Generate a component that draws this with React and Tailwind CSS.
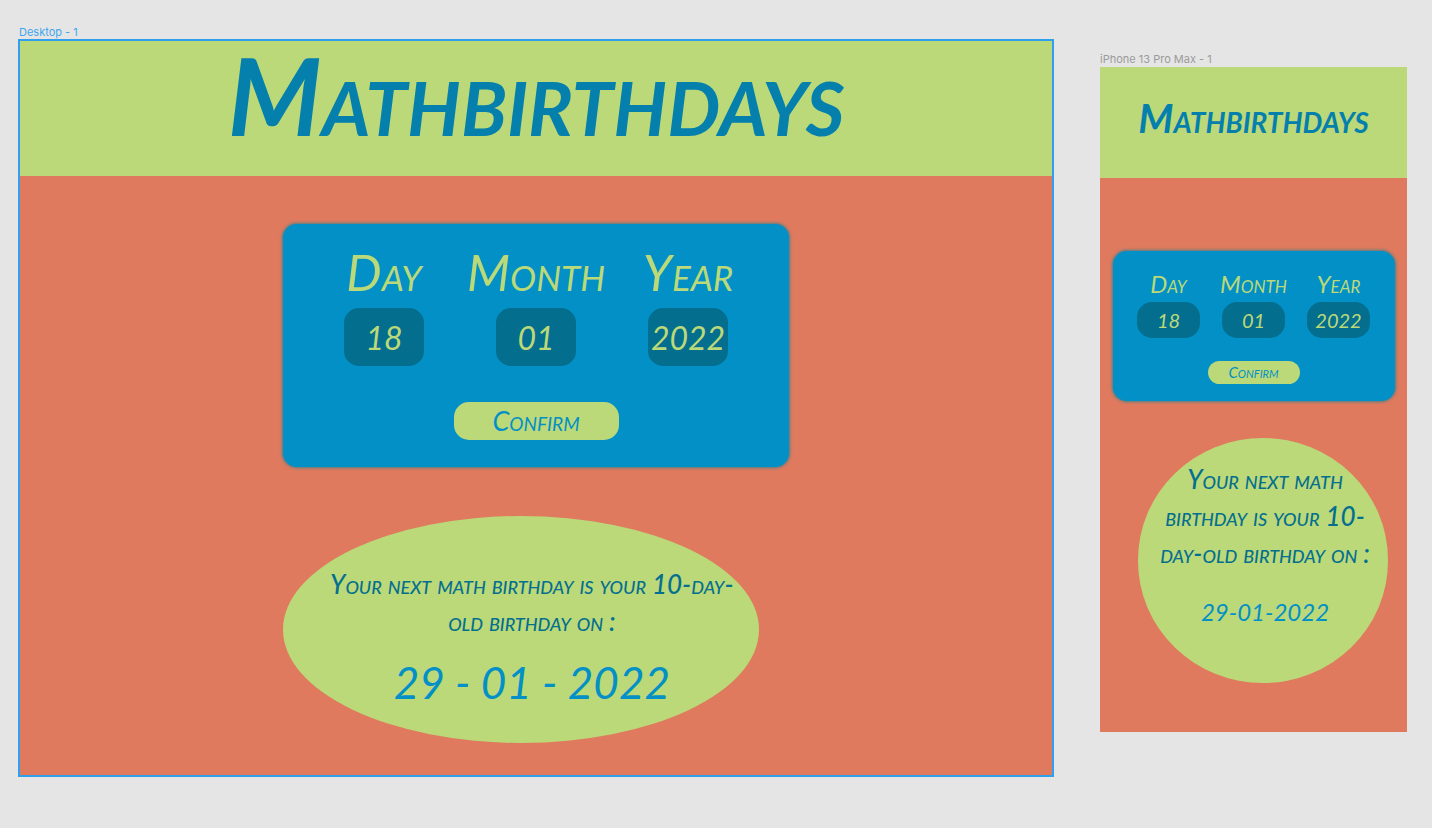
import React from "react";

const FIELDS = [
  { id: "day", label: "Day", value: "18" },
  { id: "month", label: "Month", value: "01" },
  { id: "year", label: "Year", value: "2022" },
];

function DesktopBoard() {
  return (
    <section className="min-w-0 pt-[25px]">
      <h2 className="h-[14px] px-px font-['Inter',sans-serif] text-[11px] leading-[14px] text-[#3fa5ee]">Desktop - 1</h2>
      <div className="min-h-[738px] border-2 border-[#2f9fee] bg-[#df7a5e]">
        <header className="flex h-[135px] items-center justify-center bg-[#bbd978] pb-[28px]">
          <h1 className="text-[107px] leading-[108px] font-bold text-[#0580ad]">Mathbirthdays</h1>
        </header>
        <div className="mx-auto max-w-[506px] pt-[48px]">
          <form
            className="flex flex-col items-center rounded-[14px] bg-[#0290c6] pt-[24px] pb-[27px] shadow-[0_0_3px_1px_#4a7f86]"
            onSubmit={(e) => e.preventDefault()}
          >
            <div className="flex gap-[72px]">
              {FIELDS.map((f) => (
                <div key={f.id} className="flex w-[80px] flex-col items-center gap-[12px]">
                  <label htmlFor={`desktop-${f.id}`} className="text-[50px] leading-[48px] whitespace-nowrap text-[#bbd978]">
                    {f.label}
                  </label>
                  <input
                    id={`desktop-${f.id}`}
                    defaultValue={f.value}
                    inputMode="numeric"
                    className="h-[58px] w-full rounded-[15px] bg-[#046e8f] text-center text-[32px] text-[#bbd978] outline-none"
                  />
                </div>
              ))}
            </div>
            <button className="mt-[36px] h-[38px] w-[165px] rounded-[15px] bg-[#bbd978] text-[27px] leading-[38px] text-[#0290c6]">
              Confirm
            </button>
          </form>
          <div className="mt-[49px] h-[227px] w-[94%] rounded-[50%] bg-[#bbd978] pt-[50px] pl-[22px] text-center">
            <p className="text-[26px] leading-[37px] font-medium whitespace-nowrap text-[#046f8e]">
              Your next math birthday is your 10-day-
              <br />
              old birthday on :
            </p>
            <p className="mt-[18px] text-[44px] leading-[48px] text-[#0290c6]">29 - 01 - 2022</p>
          </div>
        </div>
      </div>
    </section>
  );
}

function PhoneBoard() {
  return (
    <section className="min-w-0 pt-[52px]">
      <h2 className="h-[15px] font-['Inter',sans-serif] text-[11px] leading-[14px] text-[#9b9b9b]">iPhone 13 Pro Max - 1</h2>
      <div className="min-h-[665px] bg-[#df7a5e]">
        <header className="flex h-[111px] items-center justify-center bg-[#bbd978] pb-[10px]">
          <h1 className="text-[40px] leading-[48px] font-bold text-[#0580ad]">Mathbirthdays</h1>
        </header>
        <div className="mx-auto max-w-[282px] pt-[73px]">
          <form
            className="flex flex-col items-center rounded-[14px] bg-[#0290c6] pt-[21px] pb-[17px] shadow-[0_0_3px_1px_#4a7f86]"
            onSubmit={(e) => e.preventDefault()}
          >
            <div className="flex gap-[22px]">
              {FIELDS.map((f) => (
                <div key={f.id} className="flex w-[63px] flex-col items-center gap-[6px]">
                  <label htmlFor={`phone-${f.id}`} className="text-[24px] leading-[24px] whitespace-nowrap text-[#bbd978]">
                    {f.label}
                  </label>
                  <input
                    id={`phone-${f.id}`}
                    defaultValue={f.value}
                    inputMode="numeric"
                    className="h-[36px] w-full rounded-[15px] bg-[#046e8f] text-center text-[20px] text-[#bbd978] outline-none"
                  />
                </div>
              ))}
            </div>
            <button className="mt-[23px] h-[23px] w-[92px] rounded-[12px] bg-[#bbd978] text-[15px] leading-[23px] text-[#0290c6]">
              Confirm
            </button>
          </form>
          <div className="mt-[37px] ml-[25px] h-[245px] w-[89%] rounded-[50%] bg-[#bbd978] pt-[23px] pl-[4px] text-center">
            <p className="text-[26px] leading-[37px] font-medium whitespace-nowrap text-[#046f8e]">
              Your next math
              <br />
              birthday is your 10-
              <br />
              day-old birthday on :
            </p>
            <p className="mt-[24px] text-[24px] leading-[32px] text-[#0290c6]">29-01-2022</p>
          </div>
        </div>
      </div>
    </section>
  );
}

export default function App() {
  return (
    <main className="grid min-h-screen grid-cols-[minmax(0,1036fr)_minmax(0,307fr)] gap-[46px] bg-[#e5e5e5] pr-[25px] pl-[18px] font-['Lato',sans-serif] [&_:is(h1,label,input,button,p)]:italic [&_:is(h1,label,button,p)]:[font-variant-caps:small-caps]">
      <DesktopBoard />
      <PhoneBoard />
    </main>
  );
}
